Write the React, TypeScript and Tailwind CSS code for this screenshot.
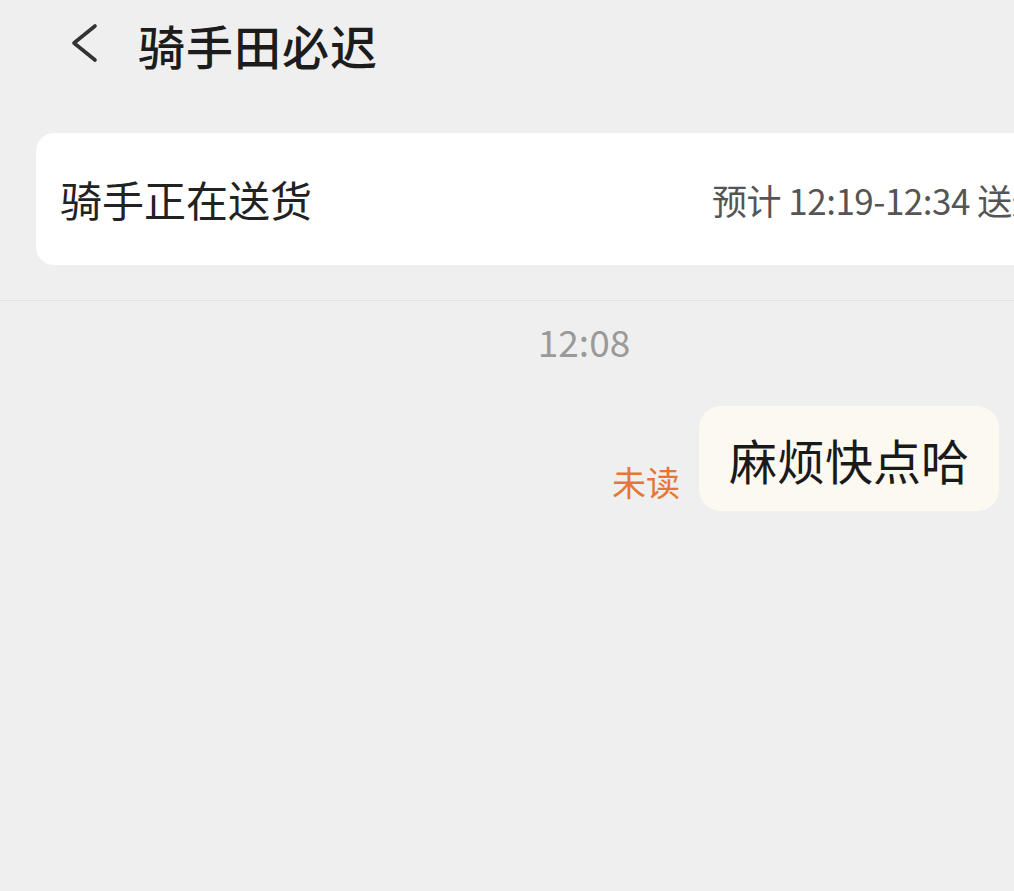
export default function App() {
  return (
    <div
      className="w-[1014px] h-[891px] overflow-hidden bg-[#efefef] flex flex-col"
      style={{ fontFamily: '"Noto Sans CJK SC", "Noto Sans", sans-serif' }}
    >
      {/* Header */}
      <div className="h-[88px] flex items-center pl-[68px] shrink-0">
        <svg width="32" height="42" viewBox="0 0 32 42" fill="none" className="mt-[-2px]">
          <path d="M27 4 L6 21 L27 38" stroke="#333" strokeWidth="3.6" strokeLinecap="round" strokeLinejoin="round" />
        </svg>
        <h1 className="ml-[38px] text-[47px] leading-none font-medium text-[#1c1c1c] tracking-[1px]">
          骑手田必迟
        </h1>
      </div>

      {/* Status card */}
      <div className="mt-[45px] ml-[36px] w-[1060px] h-[132px] bg-white rounded-[18px] flex items-center pl-[24px] overflow-hidden shrink-0">
        <span className="w-[652px] shrink-0 text-[42px] text-[#222] leading-none">骑手正在送货</span>
        <span className="text-[35px] text-[#555] leading-none whitespace-nowrap tracking-[-0.5px]">预计 12:19-12:34 送达</span>
      </div>

      {/* Divider */}
      <div className="mt-[35px] h-px bg-[#e2e2e2] shrink-0" />

      {/* Messages */}
      <div className="flex flex-col">
        <div className="mt-[22px] text-center text-[37px] leading-none text-[#9a9a9a] pl-[154px]">12:08</div>
        <div className="mt-[46px] flex justify-end items-end pr-[15px] gap-[19px]">
          <span className="text-[34px] leading-none text-[#e57635] mb-[12px]">未读</span>
          <div className="h-[105px] bg-[#fcf9f1] rounded-[22px] flex items-center px-[30px]">
            <span className="text-[48px] leading-none text-[#1a1a1a]">麻烦快点哈</span>
          </div>
        </div>
      </div>
    </div>
  )
}
